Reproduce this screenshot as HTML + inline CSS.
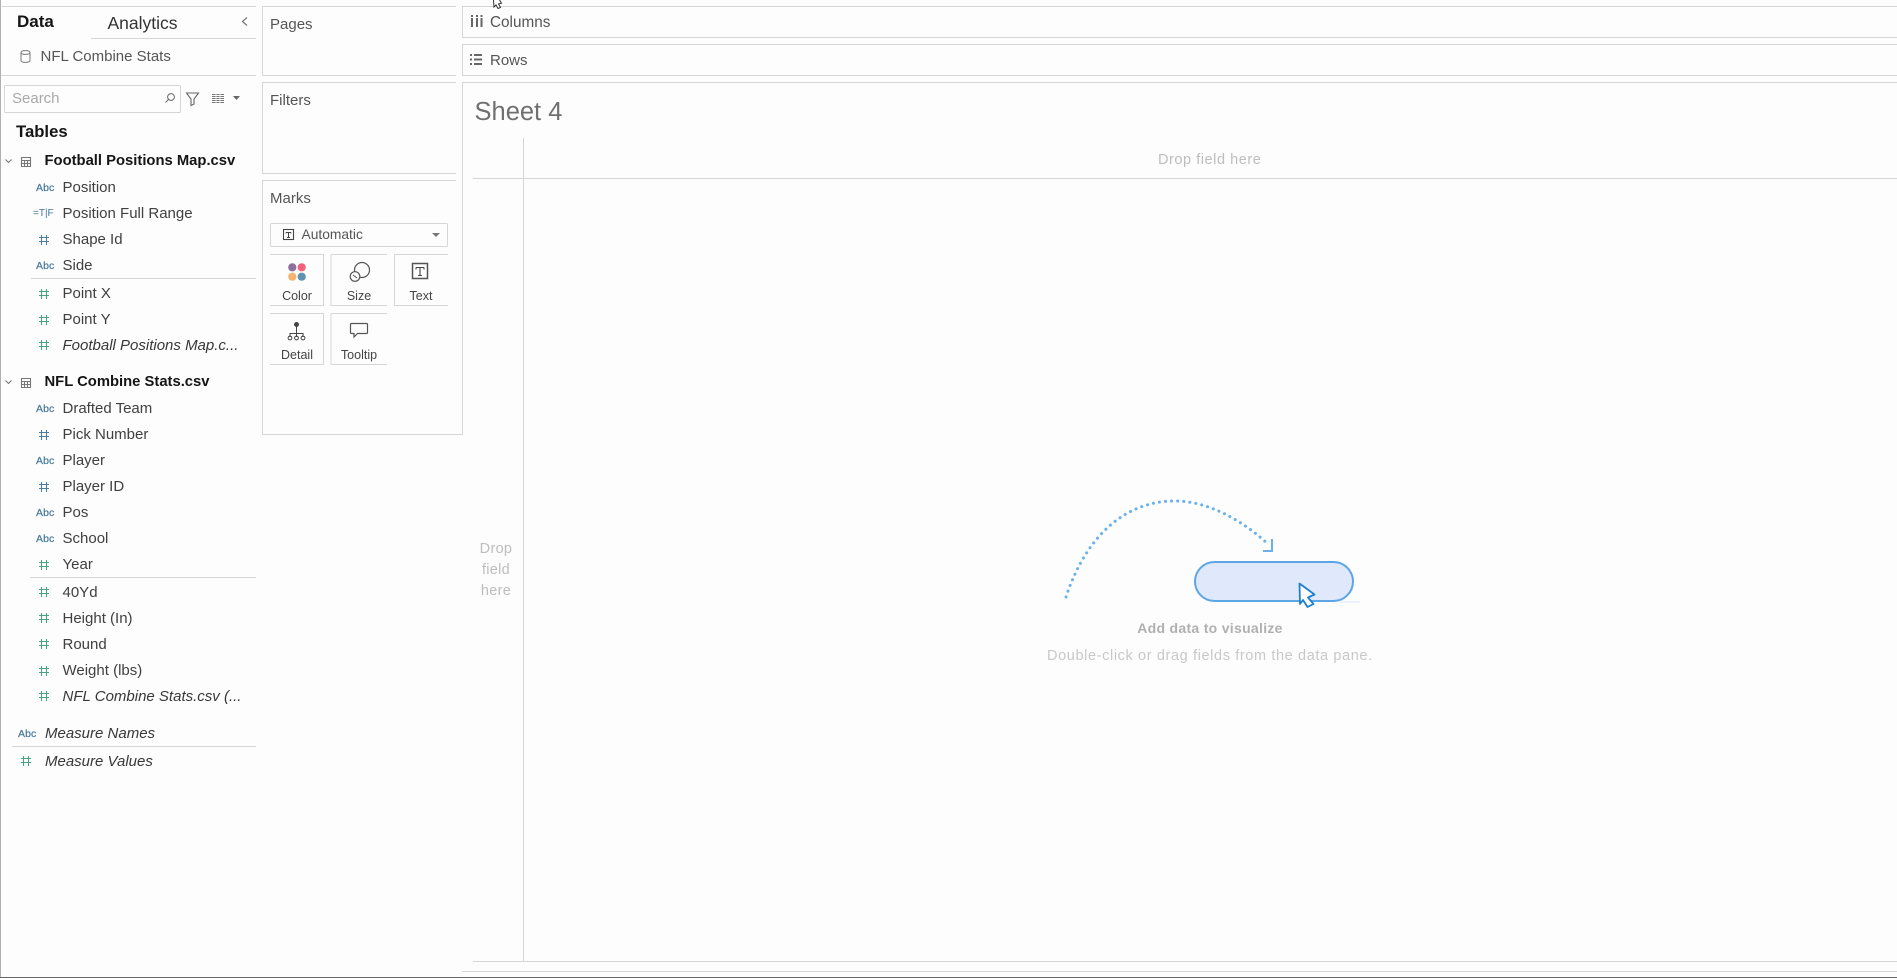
<!DOCTYPE html>
<html><head><meta charset="utf-8"><style>
html,body{margin:0;padding:0;background:#fdfdfd}
body{position:relative;width:1897px;height:978px;overflow:hidden;font-family:"Liberation Sans",sans-serif;font-size:15px;color:#404040}
.t{position:absolute;line-height:20px;height:20px;white-space:nowrap}
.b{font-weight:700;color:#151515}
.i{font-style:italic;color:#383838}
.abc{font-size:10.5px;color:#46799b;font-weight:400;letter-spacing:.1px;-webkit-text-stroke:.2px #46799b}
.c{transform:translateX(-50%);font-size:12.5px;color:#444}
.g{color:#bdbdbd}
svg{position:absolute;left:0;top:0}
</style></head><body>
<svg width="1897" height="978" viewBox="0 0 1897 978" fill="none">
<defs>
<g id="h" stroke-width="1.1"><path d="M-2.5-5V5M2.5-5V5M-5-2.5H5M-5 1.500H5"/></g>
</defs>
<g stroke="#d6d6d6" stroke-width="1">
<path d="M1.5 6.5H256M91 38.5H256M1 75.5H256"/>
<path d="M262.5 75.5H456M262.5 6.5V75.5M262.5 6.5H456"/>
<path d="M456 82.5H262.5V173.5H456"/>
<path d="M456 180.5H262.5V434.5H462.5V170"/>
<path d="M1897 6.5H462.5V37.5H1897M1897 44.5H462.5V75.5H1897M1897 82.5H462.5V173"/>
<path d="M473 178.5H1897M523.5 138V961.5M473 961.5H1897M462 971.5H1897"/>
<path d="M31 278.5H256M30 577.5H256M12 746.5H256"/>
<rect x="4.5" y="85.5" width="176" height="27" rx="1"/>
<rect x="270.5" y="223.5" width="177" height="23" rx="1"/>
<path d="M270 254.5H323.5V305.5H270M331 254.5V305.5H387M331 254.5H387M394.5 254.5V305.5H448M394.5 254.5H448"/>
<path d="M270 313.5H323.5V364.5H270M331 313.5V364.5H387M331 313.5H387"/>
</g>
<path d="M.5 0V978" stroke="#b0b0b0"/>
<path d="M0 977.5H1897" stroke="#666"/>
<!-- collapse arrow -->
<path d="M247 17.5l-4.5 4 4.5 4" stroke="#777" stroke-width="1.2"/>
<!-- db icon -->
<path d="M21 52.5c0-2.5 9-2.5 9 0V60.5c0 2.5-9 2.5-9 0ZM21 52.5c0 2.5 9 2.5 9 0" stroke="#777" stroke-width="1"/>
<!-- search -->
<circle cx="171" cy="97" r="3.4" stroke="#666"/><path d="M168.5 99.5l-3 3" stroke="#666"/>
<!-- funnel -->
<path d="M186.5 93H198.5l-4.500 6v5l-3 1.500V99Z" stroke="#666" stroke-width="1.100"/>
<!-- list grid -->
<g stroke="#777"><path d="M212 94.500H224M212 96.500H224M212 98.500H224M212 100.500H224M212 102.500H224"/><path d="M216 94V103M220 94V103" stroke="#fdfdfd" stroke-width=".8"/></g>
<path d="M233 96h7l-3.500 4Z" fill="#666"/>
<!-- table chevrons & icons -->
<g stroke="#777" stroke-width="1.100">
<path d="M5.500 159.500l3 3 3-3M5.500 380.500l3 3 3-3"/>
<path d="M21.500 157.500h9v9h-9ZM21.500 160.500h9M21.500 163.500h9M24.500 160.500v6M27.500 160.500v6"/>
<path d="M21.500 378.500h9v9h-9ZM21.500 381.500h9M21.500 384.500h9M24.500 381.500v6M27.500 381.500v6"/>
</g>
<!-- hash icons -->
<g stroke="#4a7f9f">
<use href="#h" x="44" y="240"/><use href="#h" x="44" y="435"/><use href="#h" x="44" y="487"/>
</g>
<g stroke="#4aa184">
<use href="#h" x="44" y="294"/><use href="#h" x="44" y="320"/><use href="#h" x="44" y="345"/><use href="#h" x="44" y="565"/><use href="#h" x="44" y="592"/><use href="#h" x="44" y="618"/><use href="#h" x="44" y="644"/><use href="#h" x="44" y="671"/><use href="#h" x="44" y="696"/><use href="#h" x="26" y="761"/>
</g>
<!-- Automatic T -->
<rect x="283.500" y="229.500" width="10" height="10" stroke="#444" stroke-width="1.100"/><path d="M286 232.500h5M288.500 232.500v5M287 237.500h3M286 232.500v1M291 232.500v1" stroke="#444"/>
<path d="M432 233h8l-4 4Z" fill="#777"/>
<!-- Color -->
<circle cx="292.300" cy="267.300" r="4.100" fill="#8b6f9c"/><circle cx="301.700" cy="267.300" r="4.100" fill="#f0637a"/><circle cx="292.300" cy="276.700" r="4.100" fill="#f5b36d"/><circle cx="301.700" cy="276.700" r="4.100" fill="#5f93ae"/>
<!-- Size -->
<circle cx="362" cy="270" r="7.500" stroke="#555" stroke-width="1.200"/><circle cx="355" cy="276.500" r="4.800" fill="#fdfdfd" stroke="#555" stroke-width="1.200"/><path d="M353 275l4 3" stroke="#555"/>
<!-- Text -->
<rect x="412.500" y="263.500" width="15" height="15" stroke="#555" stroke-width="1.500"/><path d="M416 267.500h8M420 267.500v8M418 275.500h4M416 267.500v2M424 267.500v2" stroke="#444" stroke-width="1.100"/>
<!-- Detail -->
<circle cx="296.500" cy="324.500" r="2.500" fill="#444"/><path d="M296.500 326v8M290 337v-3.500h13V337M296.500 333v4" stroke="#444"/>
<circle cx="290" cy="338" r="1.900" stroke="#444"/><circle cx="296.500" cy="338" r="1.900" stroke="#444"/><circle cx="303" cy="338" r="1.900" stroke="#444"/>
<!-- Tooltip -->
<path d="M351.500 323.500h15a1 1 0 0 1 1 1v8a1 1 0 0 1-1 1h-9l-3.500 3.500v-3.500h-2.500a1 1 0 0 1-1-1v-8a1 1 0 0 1 1-1Z" stroke="#555" stroke-width="1.200"/>
<!-- Columns / Rows -->
<path d="M472 18V27M477 18V27M481.500 18V27M472 15v2M477 15v2M481.500 15v2" stroke="#666" stroke-width="2"/>
<path d="M470 55h2M470 59.500h2M470 64h2M474 55h8M474 59.500h8M474 64h8" stroke="#666" stroke-width="2"/>
<!-- page cursor -->
<path d="M493.500 0L494 7l2-2 2 3.500 2.500-1-2-3.500 3-.8-2-3.200" fill="#fff" stroke="#333" stroke-width="1"/>
<!-- illustration -->
<path d="M1066 597C1087 533 1128 500 1177 501C1212 502 1245 523 1268 544" stroke="#69b0ec" stroke-width="3" stroke-dasharray=".1 6" stroke-linecap="round"/>
<path d="M1272 539V551H1263" stroke="#69b0ec" stroke-width="2"/>
<rect x="1195" y="562" width="158" height="39" rx="19.500" fill="#dfe9fb" stroke="#5ca6e6" stroke-width="2"/>
<path d="M1340 602H1360" stroke="#dbe6f6"/>
<path d="M1299.500 583.500L1314.500 594.500L1308 597.500L1313.500 604L1307.500 607L1303 600L1300 604Z" fill="#fff" stroke="#1f7fd0" stroke-width="1.800" stroke-linejoin="round"/>
</svg>

<div class="t b" style="left:17px;top:12px;font-size:17px">Data</div>
<div class="t" style="left:107.500px;top:13px;font-size:17.500px;color:#333">Analytics</div>
<div class="t" style="left:40.500px;top:46.500px;color:#555">NFL Combine Stats</div>
<div class="t" style="left:12px;top:88.500px;color:#a9a9a9">Search</div>
<div class="t b" style="left:16px;top:122px;font-size:16.700px">Tables</div>
<div class="t b" style="left:44.500px;top:151px;font-size:14.800px">Football Positions Map.csv</div>
<div class="t abc" style="left:36px;top:178px">Abc</div><div class="t" style="left:62.500px;top:178px">Position</div>
<div class="t" style="left:33px;top:204px;font-size:10px;color:#46799b">=T|F</div><div class="t" style="left:62.500px;top:204px">Position Full Range</div>
<div class="t" style="left:62.500px;top:230px">Shape Id</div>
<div class="t abc" style="left:36px;top:256px">Abc</div><div class="t" style="left:62.500px;top:256px">Side</div>
<div class="t" style="left:62.500px;top:284px">Point X</div>
<div class="t" style="left:62.500px;top:310px">Point Y</div>
<div class="t i" style="left:62.500px;top:335.500px">Football Positions Map.c...</div>
<div class="t b" style="left:44.500px;top:372px;font-size:14.800px">NFL Combine Stats.csv</div>
<div class="t abc" style="left:36px;top:399px">Abc</div><div class="t" style="left:62.500px;top:399px">Drafted Team</div>
<div class="t" style="left:62.500px;top:425px">Pick Number</div>
<div class="t abc" style="left:36px;top:451px">Abc</div><div class="t" style="left:62.500px;top:451px">Player</div>
<div class="t" style="left:62.500px;top:477px">Player ID</div>
<div class="t abc" style="left:36px;top:503px">Abc</div><div class="t" style="left:62.500px;top:503px">Pos</div>
<div class="t abc" style="left:36px;top:529px">Abc</div><div class="t" style="left:62.500px;top:529px">School</div>
<div class="t" style="left:62.500px;top:555px">Year</div>
<div class="t" style="left:62.500px;top:582.500px">40Yd</div>
<div class="t" style="left:62.500px;top:608.500px">Height (In)</div>
<div class="t" style="left:62.500px;top:634.500px">Round</div>
<div class="t" style="left:62.500px;top:661px">Weight (lbs)</div>
<div class="t i" style="left:62.500px;top:687px">NFL Combine Stats.csv (...</div>
<div class="t abc" style="left:18px;top:723.500px">Abc</div><div class="t i" style="left:45px;top:724px">Measure Names</div>
<div class="t i" style="left:45px;top:752px">Measure Values</div>

<div class="t" style="left:270px;top:14.500px;color:#555">Pages</div>
<div class="t" style="left:270px;top:90.500px;color:#555">Filters</div>
<div class="t" style="left:270px;top:188.500px;color:#555">Marks</div>
<div class="t" style="left:301.500px;top:225px;font-size:13.800px;color:#555">Automatic</div>
<div class="t c" style="left:297px;top:286px">Color</div>
<div class="t c" style="left:359px;top:286px">Size</div>
<div class="t c" style="left:421px;top:286px">Text</div>
<div class="t c" style="left:297px;top:344.500px">Detail</div>
<div class="t c" style="left:359px;top:344.500px">Tooltip</div>

<div class="t" style="left:490px;top:13px;font-size:15.300px;color:#555">Columns</div>
<div class="t" style="left:490px;top:50.500px;color:#555">Rows</div>
<div class="t" style="left:474.500px;top:97px;font-size:25.500px;height:30px;line-height:30px;color:#707070">Sheet 4</div>
<div class="t g" style="left:1158px;top:149.500px;font-size:14.500px;letter-spacing:.55px">Drop field here</div>
<div class="t g" style="left:476px;top:539px;width:40px;text-align:center;font-size:14.500px;letter-spacing:.3px">Drop</div>
<div class="t g" style="left:476px;top:560px;width:40px;text-align:center;font-size:14.500px;letter-spacing:.3px">field</div>
<div class="t g" style="left:476px;top:581px;width:40px;text-align:center;font-size:14.500px;letter-spacing:.3px">here</div>
<div class="t" style="left:1130px;top:618px;font-size:14px;font-weight:700;color:#b0b0b0;letter-spacing:.3px;width:160px;text-align:center">Add data to visualize</div>
<div class="t" style="left:1047px;top:645.500px;font-size:14.500px;color:#c8c8c8;letter-spacing:.62px">Double-click or drag fields from the data pane.</div>
</body></html>
